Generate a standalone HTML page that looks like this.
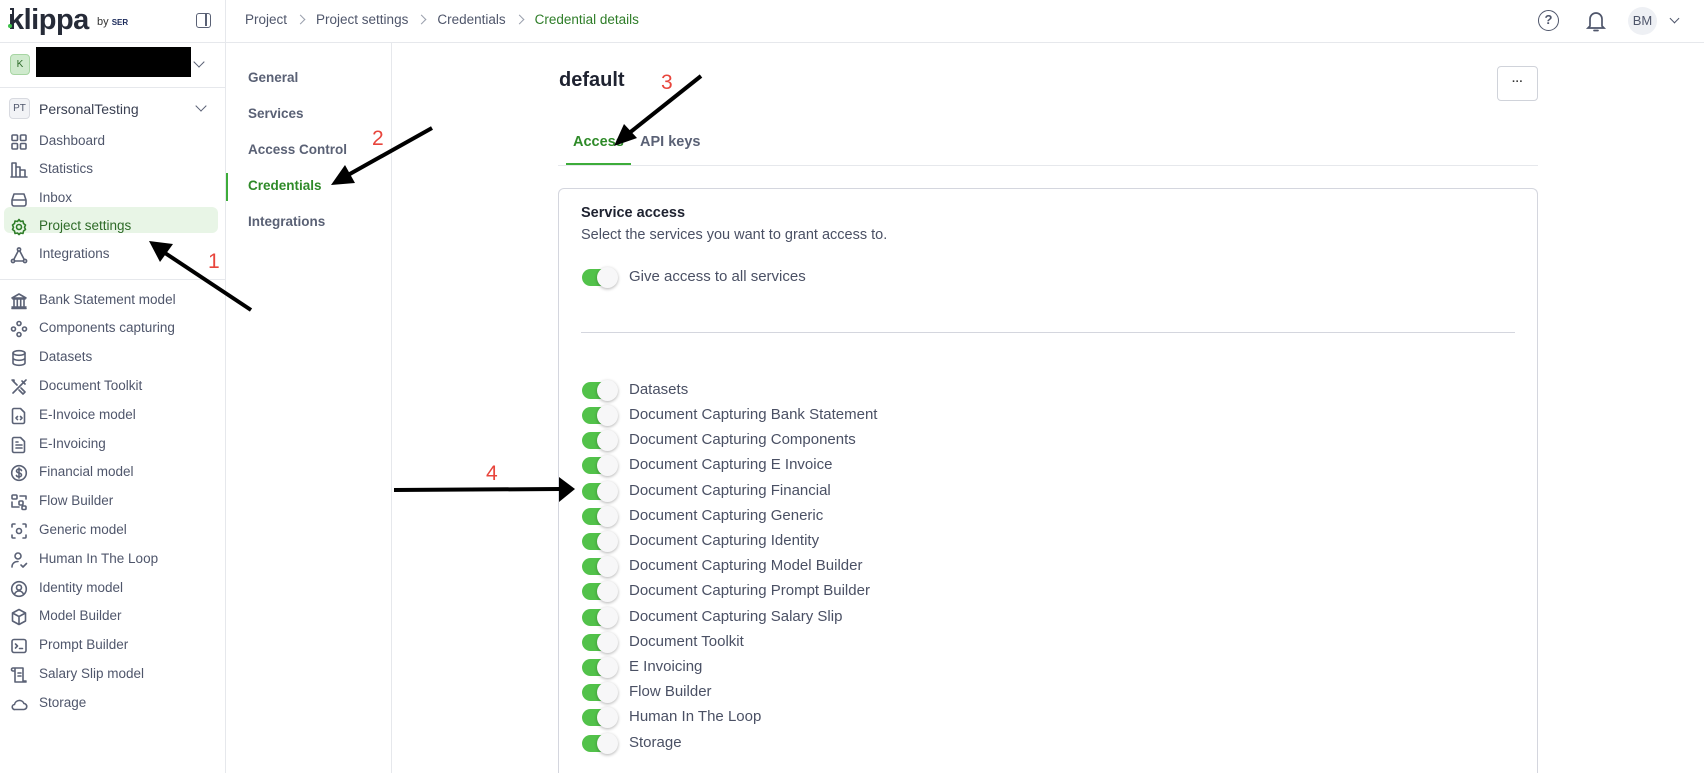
<!DOCTYPE html>
<html style="width:1704px;height:773px;overflow:hidden"><head><meta charset="utf-8"><style>
*{box-sizing:border-box;margin:0;padding:0}
body{width:1704px;height:773px;overflow:hidden;background:#fff;font-family:"Liberation Sans",sans-serif;color:#4a5064;position:relative}
.abs{position:absolute}
.side{left:0;top:0;width:226px;height:773px;border-right:1px solid #e6e8ec}
.hline{height:1px;background:#e6e8ec}
.nav{position:absolute;left:39px;font-size:13.5px;color:#4f566b;white-space:nowrap}
.ic{position:absolute;left:10px;width:18px;height:18px}
.ic svg{width:18px;height:18px;fill:none;stroke:#5a6175;stroke-width:1.6;stroke-linecap:round;stroke-linejoin:round}
.sub{position:absolute;left:248px;font-size:13.5px;font-weight:bold;color:#5a6175}
.tg{position:absolute;left:582px;width:35px;height:17px;border-radius:9px;background:#52c24a}
.tg::after{content:"";position:absolute;right:-1px;top:-2px;width:21px;height:21px;border-radius:50%;background:#f7f7f8;box-shadow:0 1px 3px rgba(0,0,0,.3)}
.tl{position:absolute;left:629px;font-size:15px;color:#4a5064;white-space:nowrap}
.num{position:absolute;color:#e8453c;font-size:21px}
.sep{display:inline-block;width:7px;height:7px;border-right:1.4px solid #9aa0ad;border-top:1.4px solid #9aa0ad;transform:rotate(45deg);margin:0 12px 1px 10px}
</style></head><body>
<div class="abs side"></div>
<div class="abs" style="left:8px;top:4px;font-size:29px;font-weight:bold;color:#262b38;letter-spacing:-0.5px">klippa</div>
<div class="abs" style="left:8px;top:10px;width:4px;height:4px;background:#fff"></div>
<div class="abs" style="left:8px;top:24px;width:4px;height:4px;border-radius:50%;background:#3dc24a"></div>
<div class="abs" style="left:97px;top:16px;font-size:11px;color:#333">by <b style="font-size:8px;color:#1b2a5a">SER</b></div>
<div class="abs" style="left:196px;top:13px;width:15px;height:15px;border:1.6px solid #5a6175;border-radius:3px"><div style="position:absolute;right:3px;top:0;width:1.6px;height:12px;background:#5a6175"></div></div>
<div class="abs hline" style="left:0;top:42px;width:1704px"></div>
<div class="abs" style="left:10px;top:54px;width:20px;height:21px;border-radius:4px;background:#cfeacd;border:1px solid #a7d5a3;font-size:10px;color:#2c6a28;text-align:center;line-height:19px">K</div>
<div class="abs" style="left:36px;top:47px;width:155px;height:30px;background:#000"></div>
<div class="abs" style="left:195px;top:58px;width:8px;height:8px;border-right:1.6px solid #5a6175;border-bottom:1.6px solid #5a6175;transform:rotate(45deg)"></div>
<div class="abs hline" style="left:0;top:87px;width:226px"></div>
<div class="abs" style="left:9px;top:98px;width:21px;height:21px;border-radius:4px;background:#f2f3f6;border:1px solid #d8dae0;font-size:10px;color:#4f566b;text-align:center;line-height:19px">PT</div>
<div class="nav" style="top:101px;font-size:14px;color:#3a4052">PersonalTesting</div>
<div class="abs" style="left:197px;top:102px;width:8px;height:8px;border-right:1.6px solid #5a6175;border-bottom:1.6px solid #5a6175;transform:rotate(45deg)"></div>
<div class="abs" style="left:4px;top:207px;width:214px;height:26px;border-radius:6px;background:#e8f5e6"></div>

<div class="ic" style="top:133px"><svg viewBox="0 0 18 18"><rect x="2" y="2" width="5.5" height="5.5" rx="1"/><rect x="10.5" y="2" width="5.5" height="5.5" rx="1"/><rect x="2" y="10.5" width="5.5" height="5.5" rx="1"/><rect x="10.5" y="10.5" width="5.5" height="5.5" rx="1"/></svg></div>
<div class="nav" style="top:133px">Dashboard</div>
<div class="ic" style="top:161px"><svg viewBox="0 0 18 18"><path d="M2 16V2h4v14M6 16V6h4v10M10 16V9h5v7M1 16h16"/></svg></div>
<div class="nav" style="top:161px">Statistics</div>
<div class="ic" style="top:190px"><svg viewBox="0 0 18 18"><path d="M2 10l2-6h10l2 6v4a2 2 0 0 1-2 2H4a2 2 0 0 1-2-2zM2 10h14"/></svg></div>
<div class="nav" style="top:190px">Inbox</div>
<div class="ic" style="top:218px"><svg viewBox="0 0 18 18" style="stroke:#2e7d28"><circle cx="9" cy="9" r="2.5"/><path d="M9 1.5l1.5 2 2.5-.5.5 2.5 2 1.5-1 2.3 1 2.2-2 1.5-.5 2.5-2.5-.5L9 16.5l-1.5-1.5-2.5.5-.5-2.5-2-1.5 1-2.2-1-2.3 2-1.5.5-2.5 2.5.5z"/></svg></div>
<div class="nav" style="top:218px;color:#2e6b28">Project settings</div>
<div class="ic" style="top:246px"><svg viewBox="0 0 18 18"><circle cx="9" cy="3.5" r="1.6"/><circle cx="3" cy="15" r="1.6"/><circle cx="15" cy="15" r="1.6"/><path d="M8.2 5L3.8 13.5M9.8 5l4.4 8.5M4.6 15h8.8"/></svg></div>
<div class="nav" style="top:246px">Integrations</div>
<div class="abs hline" style="left:0;top:279px;width:226px"></div>

<div class="ic" style="top:292px"><svg viewBox="0 0 18 18"><path d="M2 6l7-4 7 4zM3 7h12M4 8v6M7.3 8v6M10.7 8v6M14 8v6M2 15h14M2 16.5h14"/></svg></div>
<div class="nav" style="top:292px">Bank Statement model</div>
<div class="ic" style="top:320px"><svg viewBox="0 0 18 18"><circle cx="9" cy="3.5" r="2"/><circle cx="9" cy="14.5" r="2"/><circle cx="3.5" cy="9" r="2"/><circle cx="14.5" cy="9" r="2"/></svg></div>
<div class="nav" style="top:320px">Components capturing</div>
<div class="ic" style="top:349px"><svg viewBox="0 0 18 18"><ellipse cx="9" cy="4" rx="6" ry="2.3"/><path d="M3 4v10c0 1.3 2.7 2.3 6 2.3s6-1 6-2.3V4M3 9c0 1.3 2.7 2.3 6 2.3s6-1 6-2.3"/></svg></div>
<div class="nav" style="top:349px">Datasets</div>
<div class="ic" style="top:378px"><svg viewBox="0 0 18 18"><path d="M3 3l4 4M2 2l2 0 0 2M11 7l5-5M12 3l3 3M3 15l6-6M9 12l4 4 2-2-4-4M11 7l-2 2"/></svg></div>
<div class="nav" style="top:378px">Document Toolkit</div>
<div class="ic" style="top:407px"><svg viewBox="0 0 18 18"><path d="M4 1.5h6.5l4 4V15a1.5 1.5 0 0 1-1.5 1.5H4A1.5 1.5 0 0 1 2.5 15V3A1.5 1.5 0 0 1 4 1.5zM7.5 9.5l-1.5 1.5 1.5 1.5M10.5 9.5l1.5 1.5-1.5 1.5"/></svg></div>
<div class="nav" style="top:407px">E-Invoice model</div>
<div class="ic" style="top:436px"><svg viewBox="0 0 18 18"><path d="M4 1.5h6.5l4 4V15a1.5 1.5 0 0 1-1.5 1.5H4A1.5 1.5 0 0 1 2.5 15V3A1.5 1.5 0 0 1 4 1.5zM6 9h6M6 12h6M6 6h2"/></svg></div>
<div class="nav" style="top:436px">E-Invoicing</div>
<div class="ic" style="top:464px"><svg viewBox="0 0 18 18"><circle cx="9" cy="9" r="7.3"/><path d="M11.5 6.5c-.5-1-1.5-1.3-2.5-1.3-1.5 0-2.5.8-2.5 1.8 0 2.5 5 1.3 5 4 0 1-1 1.8-2.5 1.8-1.2 0-2.2-.4-2.6-1.3M9 4v10"/></svg></div>
<div class="nav" style="top:464px">Financial model</div>
<div class="ic" style="top:493px"><svg viewBox="0 0 18 18"><rect x="2" y="2" width="5" height="4" rx="1"/><rect x="9" y="8" width="4" height="4" rx="1"/><rect x="12" y="13" width="4" height="3.5" rx="1"/><path d="M2 9v5h7M10 3h6v3"/></svg></div>
<div class="nav" style="top:493px">Flow Builder</div>
<div class="ic" style="top:522px"><svg viewBox="0 0 18 18"><circle cx="9" cy="9" r="2.5"/><path d="M2 5V3a1 1 0 0 1 1-1h2M13 2h2a1 1 0 0 1 1 1v2M16 13v2a1 1 0 0 1-1 1h-2M5 16H3a1 1 0 0 1-1-1v-2"/></svg></div>
<div class="nav" style="top:522px">Generic model</div>
<div class="ic" style="top:551px"><svg viewBox="0 0 18 18"><circle cx="8" cy="5" r="3"/><path d="M2 16c0-3.5 2.5-5.5 6-5.5M11 14l2 2 3.5-3.5"/></svg></div>
<div class="nav" style="top:551px">Human In The Loop</div>
<div class="ic" style="top:580px"><svg viewBox="0 0 18 18"><circle cx="9" cy="9" r="7.3"/><circle cx="9" cy="7.5" r="2.5"/><path d="M4.5 14c1-2 2.5-3 4.5-3s3.5 1 4.5 3"/></svg></div>
<div class="nav" style="top:580px">Identity model</div>
<div class="ic" style="top:608px"><svg viewBox="0 0 18 18"><path d="M9 1.5l6.5 3.5v8L9 16.5 2.5 13V5zM2.5 5L9 8.5 15.5 5M9 8.5v8"/></svg></div>
<div class="nav" style="top:608px">Model Builder</div>
<div class="ic" style="top:637px"><svg viewBox="0 0 18 18"><rect x="2" y="2.5" width="14" height="13" rx="2"/><path d="M5.5 7l2 2-2 2M9.5 11.5h3"/></svg></div>
<div class="nav" style="top:637px">Prompt Builder</div>
<div class="ic" style="top:666px"><svg viewBox="0 0 18 18"><path d="M3 2h10v13h3M3 2a1.5 1.5 0 0 0 0 3h2M5 2v14h11M8 7h3M8 10h3"/></svg></div>
<div class="nav" style="top:666px">Salary Slip model</div>
<div class="ic" style="top:695px"><svg viewBox="0 0 18 18"><path d="M5 14.5h8.5a3 3 0 0 0 .5-6 5 5 0 0 0-9.5 1A2.5 2.5 0 0 0 5 14.5z"/></svg></div>
<div class="nav" style="top:695px">Storage</div>

<!-- breadcrumb -->
<div class="abs" style="left:245px;top:12px;font-size:13.5px;color:#4f566b;white-space:nowrap">Project<span class="sep"></span>Project settings<span class="sep"></span>Credentials<span class="sep"></span><span style="color:#2e7d28">Credential details</span></div>
<div class="abs" style="left:1538px;top:10px;width:21px;height:21px;border:1.7px solid #4f566b;border-radius:50%;font-size:13px;font-weight:bold;color:#4f566b;text-align:center;line-height:18px">?</div>
<div class="abs" style="left:1585px;top:9px"><svg width="22" height="24" viewBox="0 0 22 24" fill="none" stroke="#4f566b" stroke-width="1.7" stroke-linecap="round"><path d="M5 17V10a6 6 0 0 1 12 0v7l2 2H3zM9 21.5h4"/></svg></div>
<div class="abs" style="left:1628px;top:7px;width:29px;height:28px;border-radius:50%;background:#eef0f4;font-size:13px;color:#4f566b;text-align:center;line-height:28px">BM</div>
<div class="abs" style="left:1671px;top:15px;width:7px;height:7px;border-right:1.5px solid #4f566b;border-bottom:1.5px solid #4f566b;transform:rotate(45deg)"></div>

<!-- subnav -->
<div class="abs" style="left:391px;top:42px;width:1px;height:731px;background:#e6e8ec"></div>
<div class="sub" style="top:70px">General</div>
<div class="sub" style="top:106px">Services</div>
<div class="sub" style="top:142px">Access Control</div>
<div class="sub" style="top:178px;color:#2e8a28">Credentials</div>
<div class="abs" style="left:226px;top:173px;width:2px;height:28px;background:#3dac3a"></div>
<div class="sub" style="top:214px">Integrations</div>

<!-- content -->
<div class="abs" style="left:559px;top:69px;font-size:20px;font-weight:bold;color:#1e2230">default</div>
<div class="abs" style="left:1497px;top:66px;width:41px;height:35px;border:1px solid #d0d3da;border-radius:4px;font-size:11px;font-weight:bold;color:#333;text-align:center;line-height:30px">···</div>
<div class="abs" style="left:573px;top:134px;font-size:14.5px;font-weight:bold;color:#2e8a28">Access</div>
<div class="abs" style="left:640px;top:134px;font-size:14.5px;font-weight:bold;color:#5a6175">API keys</div>
<div class="abs hline" style="left:558px;top:165px;width:980px"></div>
<div class="abs" style="left:566px;top:163px;width:65px;height:2px;background:#3dac3a"></div>
<div class="abs" style="left:558px;top:188px;width:980px;height:585px;border:1px solid #d4d6de;border-bottom:none;border-radius:6px 6px 0 0"></div>
<div class="abs" style="left:581px;top:205px;font-size:14.5px;font-weight:bold;color:#1e2230">Service access</div>
<div class="abs" style="left:581px;top:227px;font-size:14.5px;color:#4a5064">Select the services you want to grant access to.</div>
<div class="tg" style="top:269px"></div>
<div class="tl" style="top:268px">Give access to all services</div>
<div class="abs" style="left:581px;top:332px;width:934px;height:1px;background:#d4d6de"></div>

<div class="tg" style="top:382px"></div><div class="tl" style="top:381px">Datasets</div>
<div class="tg" style="top:407px"></div><div class="tl" style="top:406px">Document Capturing Bank Statement</div>
<div class="tg" style="top:432px"></div><div class="tl" style="top:431px">Document Capturing Components</div>
<div class="tg" style="top:457px"></div><div class="tl" style="top:456px">Document Capturing E Invoice</div>
<div class="tg" style="top:483px"></div><div class="tl" style="top:482px">Document Capturing Financial</div>
<div class="tg" style="top:508px"></div><div class="tl" style="top:507px">Document Capturing Generic</div>
<div class="tg" style="top:533px"></div><div class="tl" style="top:532px">Document Capturing Identity</div>
<div class="tg" style="top:558px"></div><div class="tl" style="top:557px">Document Capturing Model Builder</div>
<div class="tg" style="top:583px"></div><div class="tl" style="top:582px">Document Capturing Prompt Builder</div>
<div class="tg" style="top:609px"></div><div class="tl" style="top:608px">Document Capturing Salary Slip</div>
<div class="tg" style="top:634px"></div><div class="tl" style="top:633px">Document Toolkit</div>
<div class="tg" style="top:659px"></div><div class="tl" style="top:658px">E Invoicing</div>
<div class="tg" style="top:684px"></div><div class="tl" style="top:683px">Flow Builder</div>
<div class="tg" style="top:709px"></div><div class="tl" style="top:708px">Human In The Loop</div>
<div class="tg" style="top:735px"></div><div class="tl" style="top:734px">Storage</div>

<!-- annotations -->
<svg class="abs" style="left:0;top:0" width="1704" height="773">
<g stroke="#000" stroke-width="4" fill="#000">
<line x1="251" y1="310" x2="165" y2="253"/><polygon points="149,241 173,244 160,262" stroke="none"/>
<line x1="432" y1="128" x2="348" y2="175"/><polygon points="331,185 345,165 355,183" stroke="none"/>
<line x1="701" y1="76" x2="628" y2="134"/><polygon points="614,146 624,124 637,138" stroke="none"/>
<line x1="394" y1="490" x2="560" y2="489"/><polygon points="575,489 559,477 559,502" stroke="none"/>
</g></svg>
<div class="num" style="left:208px;top:250px">1</div>
<div class="num" style="left:372px;top:127px">2</div>
<div class="num" style="left:661px;top:71px">3</div>
<div class="num" style="left:486px;top:462px">4</div>
</body></html>
